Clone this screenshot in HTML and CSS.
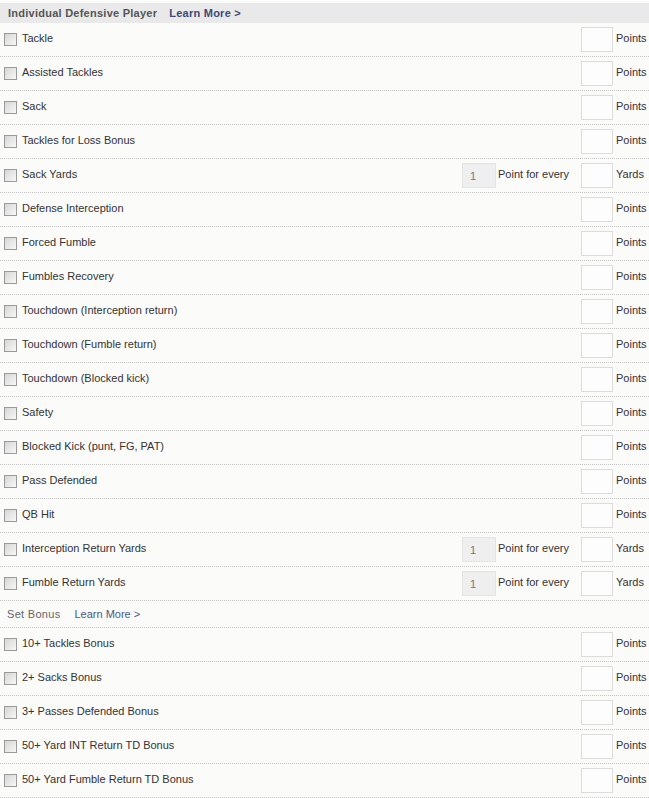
FILE: index.html
```html
<!DOCTYPE html>
<html lang="en">
<head>
    <meta charset="UTF-8">
    <title>Scoring - Individual Defensive Player</title>
    <link rel="stylesheet" href="styles.css">
</head>
<body>
    <div class="section-head">
        <span class="section-title">Individual Defensive Player</span>
        <a class="learn-more" href="#">Learn More &gt;</a>
    </div>

    <div class="stat-row">
        <label class="stat-name"><input type="checkbox" class="stat-check"><span class="stat-text">Tackle</span></label>
        <div class="stat-value"><input type="text" class="value-box"><span class="unit">Points</span></div>
    </div>
    <div class="stat-row">
        <label class="stat-name"><input type="checkbox" class="stat-check"><span class="stat-text">Assisted Tackles</span></label>
        <div class="stat-value"><input type="text" class="value-box"><span class="unit">Points</span></div>
    </div>
    <div class="stat-row">
        <label class="stat-name"><input type="checkbox" class="stat-check"><span class="stat-text">Sack</span></label>
        <div class="stat-value"><input type="text" class="value-box"><span class="unit">Points</span></div>
    </div>
    <div class="stat-row">
        <label class="stat-name"><input type="checkbox" class="stat-check"><span class="stat-text">Tackles for Loss Bonus</span></label>
        <div class="stat-value"><input type="text" class="value-box"><span class="unit">Points</span></div>
    </div>
    <div class="stat-row">
        <label class="stat-name"><input type="checkbox" class="stat-check"><span class="stat-text">Sack Yards</span></label>
        <div class="stat-value">
            <input type="text" class="ratio-box" value="1" readonly><span class="ratio-text">Point for every</span>
            <input type="text" class="value-box"><span class="unit">Yards</span>
        </div>
    </div>
    <div class="stat-row">
        <label class="stat-name"><input type="checkbox" class="stat-check"><span class="stat-text">Defense Interception</span></label>
        <div class="stat-value"><input type="text" class="value-box"><span class="unit">Points</span></div>
    </div>
    <div class="stat-row">
        <label class="stat-name"><input type="checkbox" class="stat-check"><span class="stat-text">Forced Fumble</span></label>
        <div class="stat-value"><input type="text" class="value-box"><span class="unit">Points</span></div>
    </div>
    <div class="stat-row">
        <label class="stat-name"><input type="checkbox" class="stat-check"><span class="stat-text">Fumbles Recovery</span></label>
        <div class="stat-value"><input type="text" class="value-box"><span class="unit">Points</span></div>
    </div>
    <div class="stat-row">
        <label class="stat-name"><input type="checkbox" class="stat-check"><span class="stat-text">Touchdown (Interception return)</span></label>
        <div class="stat-value"><input type="text" class="value-box"><span class="unit">Points</span></div>
    </div>
    <div class="stat-row">
        <label class="stat-name"><input type="checkbox" class="stat-check"><span class="stat-text">Touchdown (Fumble return)</span></label>
        <div class="stat-value"><input type="text" class="value-box"><span class="unit">Points</span></div>
    </div>
    <div class="stat-row">
        <label class="stat-name"><input type="checkbox" class="stat-check"><span class="stat-text">Touchdown (Blocked kick)</span></label>
        <div class="stat-value"><input type="text" class="value-box"><span class="unit">Points</span></div>
    </div>
    <div class="stat-row">
        <label class="stat-name"><input type="checkbox" class="stat-check"><span class="stat-text">Safety</span></label>
        <div class="stat-value"><input type="text" class="value-box"><span class="unit">Points</span></div>
    </div>
    <div class="stat-row">
        <label class="stat-name"><input type="checkbox" class="stat-check"><span class="stat-text">Blocked Kick (punt, FG, PAT)</span></label>
        <div class="stat-value"><input type="text" class="value-box"><span class="unit">Points</span></div>
    </div>
    <div class="stat-row">
        <label class="stat-name"><input type="checkbox" class="stat-check"><span class="stat-text">Pass Defended</span></label>
        <div class="stat-value"><input type="text" class="value-box"><span class="unit">Points</span></div>
    </div>
    <div class="stat-row">
        <label class="stat-name"><input type="checkbox" class="stat-check"><span class="stat-text">QB Hit</span></label>
        <div class="stat-value"><input type="text" class="value-box"><span class="unit">Points</span></div>
    </div>
    <div class="stat-row">
        <label class="stat-name"><input type="checkbox" class="stat-check"><span class="stat-text">Interception Return Yards</span></label>
        <div class="stat-value">
            <input type="text" class="ratio-box" value="1" readonly><span class="ratio-text">Point for every</span>
            <input type="text" class="value-box"><span class="unit">Yards</span>
        </div>
    </div>
    <div class="stat-row">
        <label class="stat-name"><input type="checkbox" class="stat-check"><span class="stat-text">Fumble Return Yards</span></label>
        <div class="stat-value">
            <input type="text" class="ratio-box" value="1" readonly><span class="ratio-text">Point for every</span>
            <input type="text" class="value-box"><span class="unit">Yards</span>
        </div>
    </div>

    <!-- Bonos -->
    <div class="sub-head">
        <span class="sub-title">Set Bonus</span>
        <a class="sub-learn-more" href="#">Learn More &gt;</a>
    </div>

    <div class="stat-row">
        <label class="stat-name"><input type="checkbox" class="stat-check"><span class="stat-text">10+ Tackles Bonus</span></label>
        <div class="stat-value"><input type="text" class="value-box"><span class="unit">Points</span></div>
    </div>
    <div class="stat-row">
        <label class="stat-name"><input type="checkbox" class="stat-check"><span class="stat-text">2+ Sacks Bonus</span></label>
        <div class="stat-value"><input type="text" class="value-box"><span class="unit">Points</span></div>
    </div>
    <div class="stat-row">
        <label class="stat-name"><input type="checkbox" class="stat-check"><span class="stat-text">3+ Passes Defended Bonus</span></label>
        <div class="stat-value"><input type="text" class="value-box"><span class="unit">Points</span></div>
    </div>
    <div class="stat-row">
        <label class="stat-name"><input type="checkbox" class="stat-check"><span class="stat-text">50+ Yard INT Return TD Bonus</span></label>
        <div class="stat-value"><input type="text" class="value-box"><span class="unit">Points</span></div>
    </div>
    <div class="stat-row">
        <label class="stat-name"><input type="checkbox" class="stat-check"><span class="stat-text">50+ Yard Fumble Return TD Bonus</span></label>
        <div class="stat-value"><input type="text" class="value-box"><span class="unit">Points</span></div>
    </div>
</body>
</html>
```

FILE: styles.css
```css
body {
    margin: 0;
    padding-top: 3px;
    background-color: #fbfbf9;
    font-family: "Liberation Sans", Arial, sans-serif;
    font-size: 11px;
    color: #333;
}

/* Encabezado de la sección */
.section-head {
    height: 20px;
    display: flex;
    align-items: center;
    padding-left: 8px;
    background-color: #e9e9e9;
    font-weight: bold;
    letter-spacing: 0.25px;
}
.section-title {
    color: #555;
}
.learn-more {
    margin-left: 12px;
    color: #3b4a7a;
    text-decoration: none;
}

/* Encabezado de bonos */
.sub-head {
    height: 26px;
    display: flex;
    align-items: center;
    padding-left: 7px;
    border-bottom: 1px dotted #c4c4c4;
}
.sub-title {
    color: #666;
    letter-spacing: 0.3px;
}
.sub-learn-more {
    margin-left: 14px;
    color: #4a5884;
    text-decoration: none;
}

/* Filas de estadísticas */
.stat-row {
    height: 33px;
    display: flex;
    align-items: center;
    justify-content: space-between;
    border-bottom: 1px dotted #c4c4c4;
}
.stat-name {
    display: flex;
    align-items: center;
    padding-bottom: 1px;
}
.stat-text {
    padding-bottom: 3px;
}
.stat-check {
    appearance: none;
    width: 13px;
    height: 13px;
    margin: 0 5px 0 4px;
    border: 1px solid #9a9a9a;
    background: linear-gradient(135deg, #d6d6d6, #f7f7f7);
}
.stat-value {
    display: flex;
    align-items: center;
}
.value-box {
    box-sizing: border-box;
    width: 32px;
    height: 25px;
    margin: 0;
    padding: 0 4px;
    border: 1px solid #dcdcdc;
    background-color: #fdfdfd;
    font: inherit;
}
.unit {
    width: 36px;
    padding-left: 3px;
    padding-bottom: 4px;
    box-sizing: border-box;
}
.ratio-box {
    box-sizing: border-box;
    width: 34px;
    height: 25px;
    margin: 0;
    padding: 0 0 0 7px;
    border: 1px solid #e4e4e4;
    background-color: #efefef;
    color: #777;
    font: inherit;
}
.ratio-text {
    width: 85px;
    padding-left: 2px;
    padding-bottom: 4px;
    box-sizing: border-box;
}
```
